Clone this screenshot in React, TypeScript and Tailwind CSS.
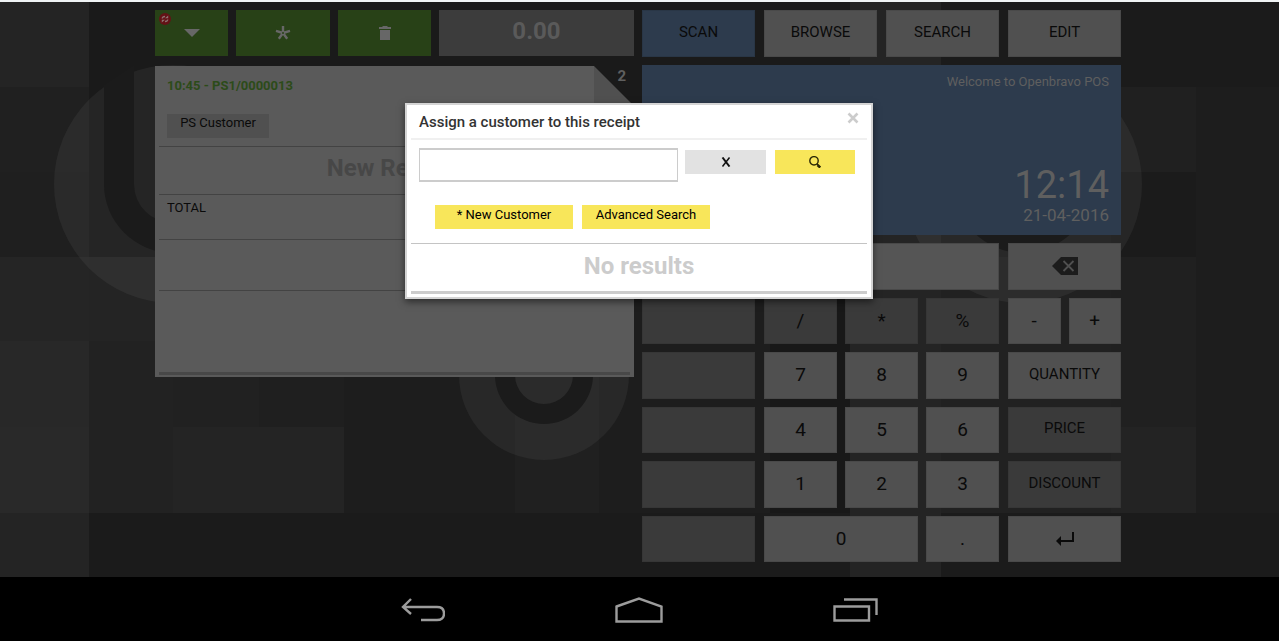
import type { ReactNode } from 'react';

// x, y, width, height, fill
const tiles: [number, number, number, number, string][] = [
  [0, 0, 89, 87, '#242424'],
  [0, 87, 89, 85, '#202020'],
  [0, 172, 89, 85, '#1f1f1f'],
  [0, 257, 89, 84, '#252525'],
  [0, 341, 89, 86, '#282828'],
  [0, 427, 89, 86, '#292929'],
  [0, 513, 89, 64, '#242424'],
  [89, 0, 761, 257, '#1a1a1a'],
  [89, 257, 84, 84, '#242424'],
  [89, 341, 84, 172, '#222222'],
  [173, 341, 86, 86, '#212121'],
  [173, 427, 171, 86, '#242424'],
  [259, 341, 85, 86, '#1f1f1f'],
  [89, 513, 761, 64, '#1b1b1b'],
  [515, 341, 84, 172, '#202020'],
  [770, 257, 80, 256, '#181818'],
  [850, 0, 91, 577, '#242424'],
  [941, 0, 338, 87, '#1b1b1b'],
  [941, 257, 170, 256, '#212121'],
  [1111, 87, 85, 85, '#202020'],
  [1111, 172, 85, 85, '#1b1b1b'],
  [1111, 257, 85, 170, '#202020'],
  [1111, 427, 85, 86, '#232323'],
  [941, 513, 338, 64, '#1b1b1b'],
];

function Ring({ cx, cy, r, outer, inner }: { cx: number; cy: number; r: number; outer: number; inner: number }) {
  const top = cy - r;
  return (
    <g>
      <circle cx={cx} cy={cy} r={r} fill="#fff" fillOpacity="0.05" />
      <path
        d={`M${cx - outer} ${top + 20}V${cy}a${outer} ${outer} 0 0 0 ${outer * 2} 0V${top + 20}H${cx + inner}V${cy}a${inner} ${inner} 0 0 1 ${-inner * 2} 0V${top}Z`}
        fill="#1b1b1b"
      />
    </g>
  );
}

function Wallpaper() {
  return (
    <svg
      className="absolute inset-0 h-full w-full"
      viewBox="0 2 1279 575"
      preserveAspectRatio="none"
      aria-hidden="true"
    >
      <rect width="1279" height="577" fill="#1d1d1d" />
      {tiles.map(([x, y, w, h, fill]) => (
        <rect key={`${x}-${y}`} x={x} y={y} width={w} height={h} fill={fill} />
      ))}
      <Ring cx={173} cy={184} r={119} outer={69} inner={39} />
      <Ring cx={544} cy={375} r={85} outer={49} inner={29} />
      <Ring cx={1023} cy={184} r={119} outer={69} inner={39} />
    </svg>
  );
}

function GreenButton({ label, children }: { label: string; children: ReactNode }) {
  return (
    <button aria-label={label} className="relative flex items-center justify-center bg-[#284117]">
      {children}
    </button>
  );
}

const keyStyles = {
  digit: 'bg-[#505050] border-[#494949] text-[19px]',
  off: 'bg-[#3a3a3a] border-[#363636] text-[19px]',
  word: 'bg-[#505050] border-[#494949] pb-[3px] text-[15px]',
  wordOff: 'bg-[#3a3a3a] border-[#363636] pb-[3px] text-[15px]',
  active: 'bg-[#2d3b4d] border-[#293646] pb-[3px] text-[15px]',
};

function Key({ children, kind = 'digit', className = '', label }: {
  children?: ReactNode;
  kind?: keyof typeof keyStyles;
  className?: string;
  label?: string;
}) {
  return (
    <button
      aria-label={label}
      className={`flex items-center justify-center border text-[#0a0a0a] ${keyStyles[kind]} ${className}`}
    >
      {children}
    </button>
  );
}

function Toolbar() {
  return (
    <div className="grid h-[46px] grid-cols-[73fr_94fr_93fr_195fr] gap-2">
      <GreenButton label="Menu">
        <svg className="absolute left-1 top-[3px]" width="12" height="12" viewBox="0 0 12 12">
          <circle cx="6" cy="6" r="6" fill="#641216" />
          <path d="M3.200 5.500Q3.500 3.500 6 3.500M8.800 6.500Q8.500 8.500 6 8.500" fill="none" stroke="#8d7070" strokeWidth="1.300" />
          <path d="M6 5.200H9.200V2.500ZM6 6.800H2.800V9.500Z" fill="#8d7070" />
        </svg>
        <svg width="16" height="8" viewBox="0 0 16 8">
          <path d="M0 0H16L8 8Z" fill="#676767" />
        </svg>
      </GreenButton>
      <GreenButton label="New receipt">
        <svg width="16" height="16" viewBox="0 0 16 16" stroke="#676767" strokeWidth="2.400">
          <path d="M8 8V1M8 8 1 5.800M8 8 15 5.800M8 8 3.800 13.800M8 8 12.200 13.800" />
          <circle cx="8" cy="8" r="1" fill="#284117" stroke="none" />
        </svg>
      </GreenButton>
      <GreenButton label="Delete receipt">
        <svg width="12" height="14" viewBox="0 0 12 14" fill="#676767">
          <path d="M0 1H3L4 0H8L9 1H12V3H0ZM1 4H11V14H1Z" />
        </svg>
      </GreenButton>
      <button className="bg-[#3c3c3c] pb-1 text-2xl font-bold text-[#5a5a5a]">0.00</button>
    </div>
  );
}

function Receipt() {
  return (
    <section className="relative mt-[10px] flex h-[311px] flex-col bg-[#5a5a5a] px-1 text-[13px] text-[#0a0a0a]">
      <div className="absolute right-0 top-0 h-20 w-10 bg-[#505050]">
        <svg width="40" height="40" viewBox="0 0 40 40">
          <path d="M0 0H40V40Z" fill="#1a1a1a" />
        </svg>
        <span className="absolute right-2 top-0 text-[15px] leading-5 font-bold text-[#5f5f5f]">2</span>
      </div>
      <div className="h-[81px] border-b border-[#434343] px-2 pt-[10px]">
        <p className="leading-5 font-bold text-[#2c4b19]">10:45 - PS1/0000013</p>
        <button className="mt-[18px] flex h-6 w-[102px] justify-center bg-[#505050] leading-[18px]">PS Customer</button>
      </div>
      <p className="h-12 border-b border-[#434343] text-center text-2xl leading-[42px] font-bold text-[#474747]">New Receipt</p>
      <p className="h-[45px] border-b border-[#434343] px-2 leading-[26px]">TOTAL</p>
      <div className="h-[51px] border-b border-[#434343]" />
      <div className="mt-auto mb-[2px] h-[3px] bg-[#484848]" />
    </section>
  );
}

function Keypad() {
  return (
    <div className="mt-2 grid h-[319px] grid-cols-4 grid-rows-6 gap-x-[9px] gap-y-2">
      <div className="col-span-3 border border-[#484848] bg-[#555555]" />
      <Key label="Backspace">
        <svg width="26" height="18" viewBox="0 0 26 18">
          <path d="M0 9 9 0H26V18H9Z" fill="#1c1c1c" />
          <path d="m11.500 4 10 10m0-10-10 10" stroke="#505050" strokeWidth="1.800" />
        </svg>
      </Key>
      <Key kind="off" label="Empty" />
      <div className="col-span-2 grid grid-cols-3 gap-2">
        {['/', '*', '%'].map(k => <Key key={k} kind="off">{k}</Key>)}
      </div>
      <div className="grid grid-cols-2 gap-2">
        <Key>-</Key>
        <Key>+</Key>
      </div>
      {[
        { keys: ['7', '8', '9'], action: 'QUANTITY', kind: 'word' as const },
        { keys: ['4', '5', '6'], action: 'PRICE', kind: 'wordOff' as const },
        { keys: ['1', '2', '3'], action: 'DISCOUNT', kind: 'wordOff' as const },
      ].map(row => (
        <div key={row.action} className="col-span-4 grid grid-cols-subgrid">
          <Key kind="off" label="Empty" />
          <div className="col-span-2 grid grid-cols-3 gap-2">
            {row.keys.map(k => <Key key={k}>{k}</Key>)}
          </div>
          <Key kind={row.kind}>{row.action}</Key>
        </div>
      ))}
      <Key kind="off" label="Empty" />
      <div className="col-span-2 grid grid-cols-3 gap-2">
        <Key className="col-span-2">0</Key>
        <Key>.</Key>
      </div>
      <Key label="Enter">
        <svg width="18" height="14" viewBox="0 0 18 14">
          <path d="M17 0V9H3" fill="none" stroke="#0a0a0a" strokeWidth="2" />
          <path d="M0 9 5 4V14Z" fill="#0a0a0a" />
        </svg>
      </Key>
    </div>
  );
}

function CustomerDialog() {
  const yellow = 'flex h-6 items-start justify-center bg-[#f8e65a] text-[13px] leading-5 text-black';
  return (
    <div
      role="dialog"
      aria-labelledby="dialog-title"
      className="absolute left-0 right-px top-[103px] mx-auto w-[468px] border-2 border-[#d4d4d4] bg-white px-1 pb-[3px] shadow-[0_3px_7px_rgba(0,0,0,0.5)]"
    >
      <div className="flex h-[35px] justify-between border-b-2 border-[#f0f0f0] px-2">
        <h2 id="dialog-title" className="text-[15px] leading-[34px] font-medium text-[#333333]">Assign a customer to this receipt</h2>
        <button aria-label="Close" className="flex h-[26px] w-3 items-center justify-center">
          <svg width="12" height="12" viewBox="0 0 12 12" stroke="#cccccc" strokeWidth="2.600">
            <path d="m1.500 1.500 9 9m0-9-9 9" />
          </svg>
        </button>
      </div>
      <div className="flex items-start px-2 pt-2">
        <input aria-label="Customer" className="h-[34px] w-[259px] border-x border-y-2 border-[#cccccc] bg-white px-2 text-sm outline-none" />
        <button aria-label="Clear" className="mt-[2px] ml-[7px] flex h-6 w-[81px] items-center justify-center bg-[#e2e2e2]">
          <svg width="10" height="10" viewBox="0 0 10 10" stroke="#111" fill="none">
            <path d="M1.500 0.500 8.500 9.500" strokeWidth="2" />
            <path d="M8.500 0.500 1.500 9.500" strokeWidth="1.500" />
          </svg>
        </button>
        <button aria-label="Search" className="mt-[2px] ml-[9px] flex h-6 w-20 items-center justify-center bg-[#f8e65a]">
          <svg width="12" height="12" viewBox="0 0 12 12" stroke="#2b2806" fill="none">
            <circle cx="5" cy="4.800" r="4.200" strokeWidth="1.400" />
            <path d="m8 7.500 0.800 1.500" strokeWidth="1.500" />
            <path d="m8.500 9 2.800 2.500" strokeWidth="2.600" />
          </svg>
        </button>
      </div>
      <div className="flex h-[62px] gap-[9px] border-b border-[#c4c4c4] px-6 pt-[23px]">
        <button className={`w-[138px] ${yellow}`}>* New Customer</button>
        <button className={`w-32 ${yellow}`}>Advanced Search</button>
      </div>
      <p className="h-[50px] border-b-3 border-[#cccccc] text-center text-2xl leading-[44px] font-bold text-[#cccccc]">No results</p>
    </div>
  );
}

function SystemBar() {
  return (
    <nav className="flex h-16 items-center justify-center gap-[170px] bg-black pt-[2px]">
      <button aria-label="Back">
        <svg width="44" height="24" viewBox="0 0 44 24" fill="none" stroke="#9c9c9c" strokeWidth="2.400">
          <path d="M10 1 2 9l8 7M2 9h34q7 0 7 6.500T36 22H20" />
        </svg>
      </button>
      <button aria-label="Home">
        <svg width="48" height="26" viewBox="0 0 48 26" fill="none" stroke="#9c9c9c" strokeWidth="2.400">
          <path d="M1.500 9.500 24 1.500 46.500 9.500V24.500H1.500Z" />
        </svg>
      </button>
      <button aria-label="Recent apps">
        <svg width="46" height="24" viewBox="0 0 46 24" fill="none" stroke="#9c9c9c" strokeWidth="2.400">
          <path d="M1.500 8.500H36V22.500H1.500ZM11 1.500H43.500V17" />
        </svg>
      </button>
    </nav>
  );
}

export default function App() {
  return (
    <div className="relative bg-black font-['Roboto',sans-serif]">
      <div className="h-[2px] bg-[#f0f4f5]" />
      <main className="relative h-[575px]">
        <Wallpaper />
        <div className="relative mx-auto grid max-w-[969px] grid-cols-2 gap-2 pt-2 pr-[3px]">
          <div>
            <Toolbar />
            <Receipt />
          </div>
          <div>
            <div className="grid h-[47px] grid-cols-4 gap-[9px]">
              {['SCAN', 'BROWSE', 'SEARCH', 'EDIT'].map(tab => (
                <Key key={tab} kind={tab === 'SCAN' ? 'active' : 'word'}>{tab}</Key>
              ))}
            </div>
            <div className="mt-2 flex h-[170px] flex-col items-end bg-[#2d3b4d] px-3 pt-[7px] pb-[10px] text-[#5f5f5f]">
              <p className="text-[13px] leading-5">Welcome to Openbravo POS</p>
              <p className="mt-auto text-[38px] leading-10">12:14</p>
              <p className="text-[17px] leading-5">21-04-2016</p>
            </div>
            <Keypad />
          </div>
        </div>
      </main>
      <CustomerDialog />
      <SystemBar />
    </div>
  );
}
